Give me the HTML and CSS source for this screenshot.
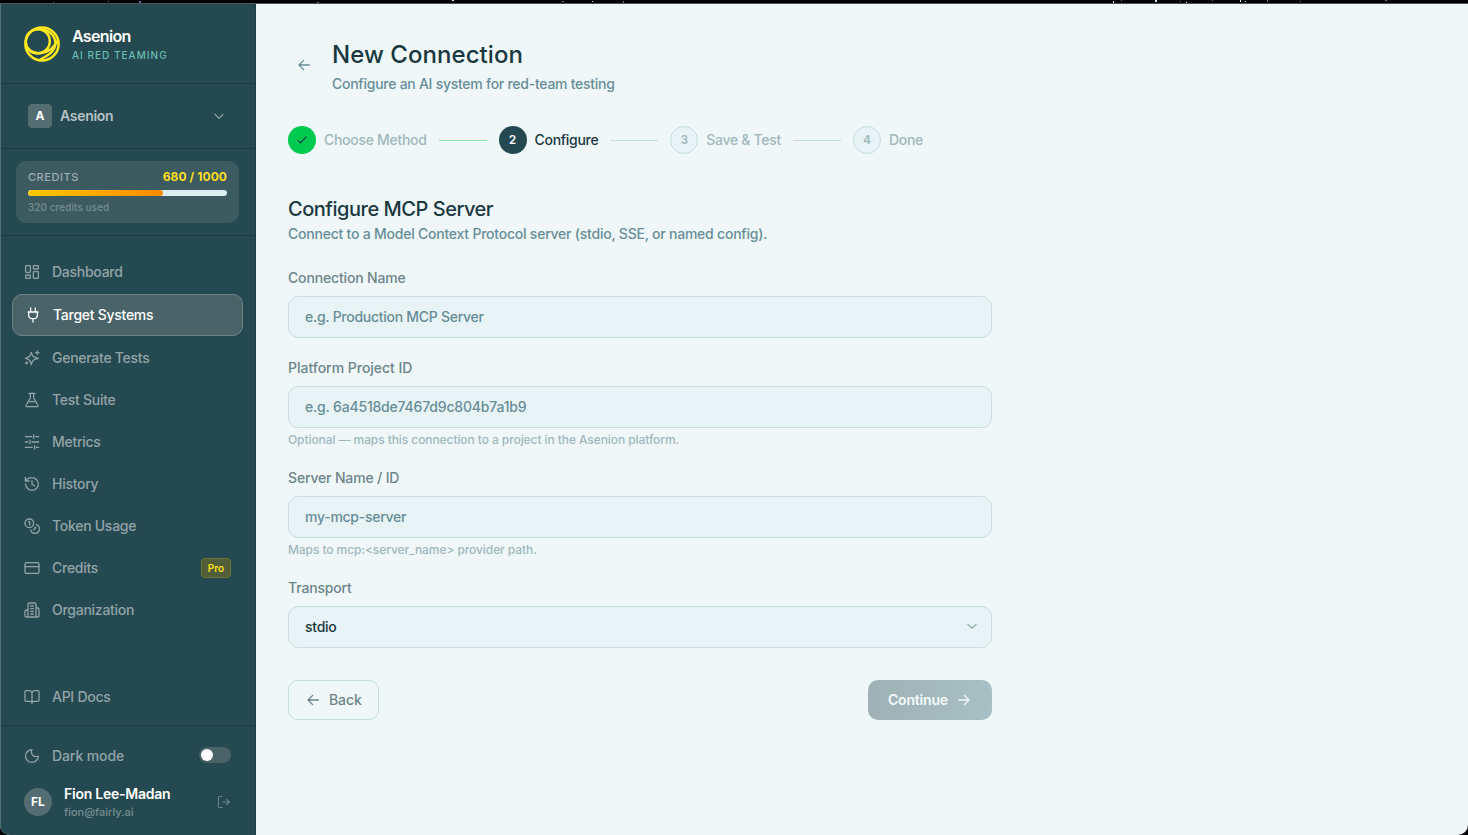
FILE: index.html
```html
<!DOCTYPE html>
<html lang="en">
<head>
<meta charset="utf-8">
<title>New Connection</title>
<link rel="stylesheet" href="styles.css">
</head>
<body>
<div class="desktop">
<svg class="stars" width="1468" height="3" viewBox="0 0 1468 3"><g fill="#6c6c9c"><path d="M139 1h2v2h-2zM317 2h2v1h-2zM562 1h2v1h-2zM1121 0h1v1h-1zM1212 0h1v1h-1zM1300 1h1v1h-1zM1385 0h2v1h-2zM1267 0h1v2h-1zM1180 1h1v1h-1zM623 1h1v2h-1zM53 2h1v1h-1zM108 1h1v1h-1z"/></g><g fill="#cfe8ff"><path d="M452 0h2v1h-2zM592 1h1v1h-1zM1113 1h1v2h-1zM1155 0h2v2h-2zM1186 2h1v1h-1zM1240 0h1v2h-1zM1245 1h1v1h-1z"/></g></svg>
<div class="window">
<aside class="sidebar">
  <header class="brand">
    <svg class="logo" width="36" height="36" viewBox="0 0 36 36" fill="none" stroke="#ffe81f" stroke-width="2.500"><circle cx="18" cy="18" r="16.600"/><circle cx="13.800" cy="15.200" r="12"/><path d="M8 4.500C20-1 32 8 31.300 18C30.500 27 22 30 15.500 34"/><path d="M1.800 20C8 30.500 26 30.500 34 14"/></svg>
    <div><div class="brand-name">Asenion</div><div class="brand-tag">AI RED TEAMING</div></div>
  </header>
  <div class="org"><span class="org-badge">A</span><span class="org-name">Asenion</span><svg class="icon" width="14" height="14" viewBox="0 0 24 24"><path d="m5 9 7 7 7-7"/></svg></div>
  <div class="credits"><div class="credit-card">
    <div class="credit-top"><span class="credit-label">CREDITS</span><span class="credit-value">680 / 1000</span></div>
    <div class="meter"><div class="meter-fill" style="width:68%"></div></div>
    <div class="credit-used">320 credits used</div>
  </div></div>
  <nav class="nav">
    <a class="item"><svg class="icon" width="16" height="16" viewBox="0 0 24 24"><rect x="2.500" y="2.500" width="7" height="10" rx="1"/><rect x="14" y="2.500" width="7.500" height="5" rx="1"/><rect x="14" y="11.500" width="7.500" height="10" rx="1"/><rect x="2.500" y="16.500" width="7" height="5" rx="1"/></svg><span>Dashboard</span></a>
    <a class="item active"><svg class="icon" width="16" height="16" viewBox="0 0 24 24"><path d="M12 18v4.500M8.500 7V1.500M15.500 7V1.500M4.500 7.500h15M5.500 7.500v4.500a5 5 0 0 0 5 5.500h3a5 5 0 0 0 5-5.500V7.500"/></svg><span>Target Systems</span></a>
    <a class="item"><svg class="icon" width="16" height="16" viewBox="0 0 24 24"><path d="M11 3.500C12.500 10 14 11 21.500 12.500C14 14 12.500 15.500 11 22C9.500 15.500 8 14 2 12.500C8 11 9.500 10 11 3.500ZM20 1.500v5M17.500 4h5"/><circle cx="4" cy="19.500" r="1.200"/></svg><span>Generate Tests</span></a>
    <a class="item"><svg class="icon" width="16" height="16" viewBox="0 0 24 24"><path d="M7.500 2h9M9.500 2v7L3.300 19.500A1.600 1.600 0 0 0 4.700 22h14.600a1.600 1.600 0 0 0 1.400-2.500L14.500 9V2M6.500 14.500h11"/></svg><span>Test Suite</span></a>
    <a class="item"><svg class="icon" width="16" height="16" viewBox="0 0 24 24"><path d="M2 4h9.500M17.500 4h4.500M14.500 1.500v5M2 12h4M12 12h10M9 9.500v5M2 20h10.500M18.500 20h3.500M16 17.500v5"/></svg><span>Metrics</span></a>
    <a class="item"><svg class="icon" width="16" height="16" viewBox="0 0 24 24"><path d="M2.500 12a9.500 9.500 0 1 0 9.500-9.500A10.500 10.500 0 0 0 4.500 5L2 7.500M2 2v5.500h5.500M12 7v5.500l4 2.500"/></svg><span>History</span></a>
    <a class="item"><svg class="icon" width="16" height="16" viewBox="0 0 24 24"><circle cx="8" cy="8" r="6.500"/><path d="M18.500 9.800A6.800 6.800 0 1 1 10 18.300M7 5.500h1.500v5M16.500 13.800l1 .9-3 3"/></svg><span>Token Usage</span></a>
    <a class="item"><svg class="icon" width="16" height="16" viewBox="0 0 24 24"><rect x="1.500" y="4" width="21" height="16" rx="2"/><path d="M1.500 10h21"/></svg><span>Credits</span><b class="pro">Pro</b></a>
    <a class="item"><svg class="icon" width="16" height="16" viewBox="0 0 24 24"><path d="M6 22.500V3.500a2 2 0 0 1 2-2h8a2 2 0 0 1 2 2v19ZM6 12H3.500a2 2 0 0 0-2 2v6.500a2 2 0 0 0 2 2H6M18 9h2.500a2 2 0 0 1 2 2v9.500a2 2 0 0 1-2 2H18M10 6h4M10 10h4M10 14h4M10 18h4"/></svg><span>Organization</span></a>
    <a class="item docs"><svg class="icon" width="16" height="16" viewBox="0 0 24 24"><path d="M12 6.500v15M3 18.500a1.500 1.500 0 0 1-1.500-1.500V4A1.500 1.500 0 0 1 3 2.500h5a4 4 0 0 1 4 4 4 4 0 0 1 4-4h5A1.500 1.500 0 0 1 22.500 4v13a1.500 1.500 0 0 1-1.500 1.500h-6a3 3 0 0 0-3 3 3 3 0 0 0-3-3Z"/></svg><span>API Docs</span></a>
  </nav>
  <footer class="account">
    <div class="mode"><svg class="icon" width="16" height="16" viewBox="0 0 24 24"><path d="M12 2.500a7 7 0 0 0 9.500 9.500A9.600 9.600 0 1 1 12 2.500Z"/></svg><span>Dark mode</span><i class="toggle"></i></div>
    <div class="user"><span class="avatar">FL</span><div class="who"><div class="user-name">Fion Lee-Madan</div><div class="user-mail">fion@fairly.ai</div></div><svg class="icon" width="14" height="14" viewBox="0 0 24 24"><path d="M9 21.500H4.500a2 2 0 0 1-2-2v-15a2 2 0 0 1 2-2H9M16.500 16.500l4.500-4.500-4.500-4.500M21 12H9.500"/></svg></div>
  </footer>
</aside>
<main class="main">
  <header class="head"><svg class="icon arrow" width="16" height="16" viewBox="0 0 24 24"><path d="m11.500 19-7-7 7-7M20 12H4.500"/></svg><div><h1>New Connection</h1><p class="sub">Configure an AI system for red-team testing</p></div></header>
  <div class="steps">
    <span class="dot done"><svg class="icon" width="14" height="14" viewBox="0 0 24 24"><path d="M19 6.500 9.500 17 5 12.500"/></svg></span><span class="step">Choose Method</span><i class="line green"></i>
    <span class="dot current">2</span><span class="step now">Configure</span><i class="line"></i>
    <span class="dot">3</span><span class="step">Save &amp; Test</span><i class="line"></i>
    <span class="dot">4</span><span class="step">Done</span>
  </div>
  <form class="form">
    <h2>Configure MCP Server</h2>
    <p class="intro">Connect to a Model Context Protocol server (stdio, SSE, or named config).</p>
    <div class="field"><label>Connection Name</label><div class="input">e.g. Production MCP Server</div></div>
    <div class="field"><label class="wide">Platform Project ID</label><div class="input id">e.g. 6a4518de7467d9c804b7a1b9</div><p class="hint">Optional — maps this connection to a project in the Asenion platform.</p></div>
    <div class="field"><label>Server Name / ID</label><div class="input">my-mcp-server</div><p class="hint">Maps to mcp:&lt;server_name&gt; provider path.</p></div>
    <div class="field"><label>Transport</label><div class="input select"><span>stdio</span><svg class="icon" width="14" height="14" viewBox="0 0 24 24"><path d="m5 7.500 7 7 7-7"/></svg></div></div>
    <div class="actions"><div class="btn back"><svg class="icon" width="16" height="16" viewBox="0 0 24 24"><path d="m11.500 19-7-7 7-7M20 12H4.500"/></svg><span>Back</span></div><div class="btn next"><span>Continue</span><svg class="icon" width="16" height="16" viewBox="0 0 24 24"><path d="m12.500 5 7 7-7 7M4 12h15.500"/></svg></div></div>
  </form>
</main>
</div>
</div>
</body>
</html>
```
FILE: styles.css
```css
* { box-sizing: border-box; }
body { margin: 0; font-family: Inter, sans-serif; font-size: 14px; line-height: 20px; font-weight: 500; white-space: nowrap; }
h1, h2, p { margin: 0; font-weight: 500; }
.icon { fill: none; stroke: currentColor; stroke-width: 1.9; stroke-linecap: round; stroke-linejoin: round; flex: none; display: block; }
.desktop { width: 1468px; height: 835px; background: #030305; overflow: hidden; display: flex; flex-direction: column; }
.stars { display: block; flex: none; }
.window { flex: 1; display: flex; border-top: 1px solid #4c5256; border-radius: 0 0 10px 10px; overflow: hidden; background: #eff7f9; }
.sidebar { width: 256px; flex: none; display: flex; flex-direction: column; background: #244950; color: #92a4a8; border-left: 1px solid #50737a; border-right: 1px solid #1e3f46; }
.brand { height: 80px; border-bottom: 1px solid #1c3d44; padding: 0 23px; display: flex; align-items: center; gap: 12px; }
.brand-name { color: #fff; font-size: 16px; font-weight: 600; letter-spacing: -.65px; line-height: 20px; margin-top: 2px; }
.brand-tag { color: #6bbdb2; font-size: 10px; letter-spacing: 1.02px; line-height: 16px; margin-top: 1px; }
.org { height: 65px; border-bottom: 1px solid #1c3d44; padding: 0 29px 0 27px; display: flex; align-items: center; gap: 8px; }
.org-badge { width: 24px; height: 24px; border-radius: 4px; background: #546d72; color: #fff; font-size: 12px; font-weight: 700; text-align: center; line-height: 24px; }
.org-name { color: #b6c2c5; font-weight: 600; letter-spacing: -.3px; flex: 1; }
.credits { height: 87px; border-bottom: 1px solid #1c3d44; padding: 12px 16px 12px 15px; }
.credit-card { height: 62px; border-radius: 10px; background: #3c5b61; padding: 8px 12px; }
.credit-top { display: flex; justify-content: space-between; line-height: 16px; }
.credit-label { font-size: 11px; letter-spacing: .55px; color: #9eadb0; }
.credit-value { font-size: 12px; font-weight: 700; letter-spacing: .08px; color: #fddf20; }
.meter { height: 6px; border-radius: 3px; background: #dbeef1; margin-top: 5px; overflow: hidden; }
.meter-fill { height: 6px; border-radius: 3px; background: linear-gradient(90deg, #ffc800, #ff8a00); }
.credit-used { font-size: 10px; line-height: 14px; margin-top: 4px; color: #778c90; letter-spacing: .05px; }
.nav { flex: 1; padding: 16px 12px 8px 11px; display: flex; flex-direction: column; gap: 2px; }
.item { height: 40px; padding: 0 12px; display: flex; align-items: center; gap: 12px; border-radius: 10px; letter-spacing: -.27px; }
.item.active { height: 42px; border: 1px solid #6d8387; background: #496368; color: #fff; }
.docs { margin-top: auto; }
.pro { margin-left: auto; height: 20px; width: 30px; border: 1px solid #74752d; border-radius: 4px; background: #505f3a; color: #fddf20; font-size: 10px; line-height: 19px; text-align: center; font-weight: 600; letter-spacing: 0; }
.account { height: 110px; border-top: 1px solid #1c3d44; padding: 20px 24px 0 23px; }
.mode { display: flex; align-items: center; gap: 12px; height: 20px; letter-spacing: -.1px; }
.toggle { margin: -2px 0 0 auto; width: 32px; height: 16px; border-radius: 8px; background: #496368; padding: 2px; }
.toggle::before { content: ""; display: block; width: 12px; height: 12px; border-radius: 50%; background: #fff; }
.user { display: flex; align-items: center; gap: 12px; margin-top: 18px; height: 36px; }
.avatar { width: 28px; height: 28px; border-radius: 50%; background: #546d72; color: #fff; font-size: 12px; font-weight: 700; line-height: 28px; text-align: center; }
.who { flex: 1; padding-top: 2px; }
.user-name { color: #fff; font-weight: 600; line-height: 18px; letter-spacing: -.25px; }
.user-mail { font-size: 11px; line-height: 18px; color: #788d92; }
.user .icon { color: #6b8388; }
.main { flex: 1; padding: 32px; }
.head { display: flex; align-items: center; height: 60px; color: #688d98; }
.arrow { margin: 0 20px 2px 8px; }
h1 { color: #193840; font-size: 24px; line-height: 32px; letter-spacing: .05px; }
.sub { line-height: 20px; margin-top: 3px; letter-spacing: -.26px; }
.steps { display: flex; align-items: center; margin-top: 30px; height: 28px; color: #a0b8bd; }
.step { letter-spacing: -.3px; }
.dot { width: 28px; height: 28px; border-radius: 50%; border: 1px solid #c6dee0; background: #e7f3f5; font-size: 12px; font-weight: 600; display: grid; place-items: center; margin-right: 8px; }
.dot.done { border: 0; background: #00cb50; color: #193840; }
.dot.current { border: 0; background: #244950; color: #fff; }
.now { color: #193840; }
.line { width: 48px; height: 1px; background: #c3dce0; margin: 1px 12px 0; }
.line.green { background: #83e3a9; }
.form { width: 704px; padding-top: 41px; }
h2 { font-size: 20px; line-height: 28px; color: #193840; letter-spacing: -.48px; }
.intro { color: #688d98; line-height: 20px; margin-top: 1px; letter-spacing: -.225px; }
.field { margin-top: 20px; }
.intro + .field { margin-top: 24px; }
label { display: block; color: #6c8589; line-height: 20px; margin-bottom: 8px; letter-spacing: -.16px; }
.wide { letter-spacing: -.02px; }
.input { height: 42px; border: 1px solid #c6dee0; border-radius: 10px; background: #e7f3f5; color: #688d98; padding: 0 16px; line-height: 40px; letter-spacing: -.27px; }
.id { letter-spacing: -.19px; }
.select { display: flex; align-items: center; justify-content: space-between; color: #193840; padding-right: 12px; }
.select .icon { color: #86a4aa; }
.hint { font-size: 12px; line-height: 16px; color: #a0b8bd; margin-top: 4px; letter-spacing: -.08px; }
.actions { display: flex; justify-content: space-between; margin-top: 32px; }
.btn { height: 40px; border-radius: 10px; display: flex; align-items: center; gap: 8px; }
.back { width: 91px; border: 1px solid #c6dee0; padding-left: 16px; color: #6c8589; letter-spacing: -.1px; }
.next { width: 124px; padding-left: 20px; color: #f4fafb; font-weight: 600; letter-spacing: -.2px; background: linear-gradient(90deg, #9fb1b5, #a8c0c5); }
```
